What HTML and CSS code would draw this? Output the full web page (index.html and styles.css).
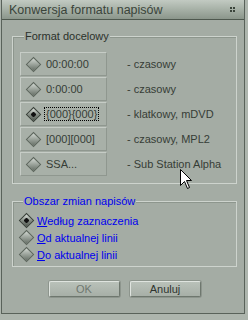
FILE: index.html
```html
<!DOCTYPE html>
<html lang="pl">
<head>
  <meta charset="UTF-8" />
  <title>Konwersja formatu napisów</title>
  <link rel="stylesheet" href="styles.css">
</head>
<body>
  <div class="window">
    <div class="titlebar">
      <span class="title">Konwersja formatu napisów</span>
      <span class="close"><i></i><i></i><i></i><i></i></span>
    </div>

    <div class="content">
      <fieldset class="group">
        <legend>Format docelowy</legend>
        <div class="format-row">
          <div class="option-box"><span class="diamond"></span><span class="label">00:00:00</span></div>
          <span class="desc">- czasowy</span>
        </div>
        <div class="format-row">
          <div class="option-box"><span class="diamond"></span><span class="label">0:00:00</span></div>
          <span class="desc">- czasowy</span>
        </div>
        <div class="format-row">
          <div class="option-box"><span class="diamond checked"></span><span class="label focus">{000}{000}</span></div>
          <span class="desc">- klatkowy, mDVD</span>
        </div>
        <div class="format-row">
          <div class="option-box"><span class="diamond"></span><span class="label">[000][000]</span></div>
          <span class="desc">- czasowy, MPL2</span>
        </div>
        <div class="format-row">
          <div class="option-box"><span class="diamond"></span><span class="label">SSA...</span></div>
          <span class="desc">- Sub Station Alpha</span>
        </div>
      </fieldset>

      <fieldset class="group area">
        <legend>Obszar zmian napisów</legend>
        <div class="radio"><span class="diamond checked"></span><span><u>W</u>edług zaznaczenia</span></div>
        <div class="radio"><span class="diamond"></span><span><u>O</u>d aktualnej linii</span></div>
        <div class="radio"><span class="diamond"></span><span><u>D</u>o aktualnej linii</span></div>
      </fieldset>

      <div class="buttons">
        <button class="btn btn-ok">OK</button>
        <button class="btn">Anuluj</button>
      </div>
    </div>

    <svg class="cursor" width="13" height="21" viewBox="0 0 13 21">
      <path d="M0.5 0.5 L0.5 16.5 L4.5 12.5 L7.5 19.5 L9.5 18.5 L6.5 11.5 L11.5 11.5 Z" fill="#fff" stroke="#000" stroke-width="1"/>
    </svg>
  </div>
</body>
</html>
```

FILE: styles.css
```css
body {
  margin: 0;
  background: #adb5ad;
  font-family: "Liberation Sans", Arial, sans-serif;
  font-size: 11px;
  color: #2b312b;
}

.window {
  position: relative;
  margin-left: 1px;
  width: 242px;
  height: 313px;
  background: #a4aca4;
  border-left: 1px solid #59625a;
  border-right: 1px solid #59625a;
  border-bottom: 1px solid #59625a;
}

.titlebar {
  height: 19px;
  border-bottom: 1px solid #4e584e;
  background: linear-gradient(#c2cac2, #a9b3a9 45%, #8b968b);
  display: flex;
  align-items: center;
  justify-content: space-between;
  padding: 0 7px 0 7px;
}

.title {
  font-size: 12.5px;
  color: #3a443a;
}

.close {
  display: grid;
  grid-template-columns: 2px 2px;
  gap: 1px;
  margin-right: 2px;
}

.close i {
  width: 2px;
  height: 2px;
  background: #3b443b;
}

.content {
  padding: 0 7px 0 10px;
}

.group {
  margin: 10px 0 0 0;
  padding: 9px 0 7px 7px;
  border: 1px solid #cdd3cd;
  box-shadow: inset 1px 1px 0 #8d968d;
  display: flex;
  flex-direction: column;
  gap: 1px;
}

.group legend {
  padding: 0 1px;
  margin-left: 4px;
  line-height: 13px;
  background: #a4aca4;
  color: #2b312b;
}

.format-row {
  display: flex;
  align-items: center;
  height: 24px;
}

.option-box {
  box-sizing: border-box;
  width: 87px;
  height: 24px;
  display: flex;
  align-items: center;
  padding-left: 5px;
  gap: 4px;
  border: 1px solid;
  border-color: #c6ccc6 #8f978f #8f978f #c6ccc6;
  background: #a8b0a8;
}

.label {
  color: #363d36;
  padding: 0 1px;
}

.label.focus {
  outline: 1px dotted #000;
  outline-offset: 0;
}

.desc {
  margin-left: 20px;
  color: #363d36;
}

.diamond {
  display: inline-block;
  flex: none;
  width: 9px;
  height: 9px;
  margin: 0 2px;
  transform: rotate(45deg);
  background: linear-gradient(135deg, #d2d8d2, #9aa29a 50%, #646d64);
  border: 1px solid #5d665d;
}

.diamond.checked {
  background: radial-gradient(circle, #111 0 2px, transparent 2.5px),
    linear-gradient(135deg, #e0e5e0, #868e86 50%, #4a524a);
  border-color: #3a413a;
}

.area {
  margin-top: 11px;
  padding: 4px 0 3px 6px;
  gap: 0;
}

.area legend {
  color: #0000ee;
}

.radio {
  height: 17px;
  display: flex;
  align-items: center;
  gap: 3px;
  color: #0000ee;
}

.buttons {
  display: flex;
  justify-content: center;
  gap: 10px;
  margin-top: 14px;
}

.btn {
  box-sizing: border-box;
  width: 71px;
  height: 16px;
  padding: 0;
  font: inherit;
  color: #2f352f;
  border: 1px solid;
  border-color: #dfe4df #6e776e #6e776e #dfe4df;
  border-radius: 2px;
  background: linear-gradient(#b9c1b9, #a7afa7);
  box-shadow: 0 0 0 1px #8d958d;
}

.btn-ok {
  color: #6f776f;
}

.cursor {
  position: absolute;
  left: 178px;
  top: 169px;
}
```
